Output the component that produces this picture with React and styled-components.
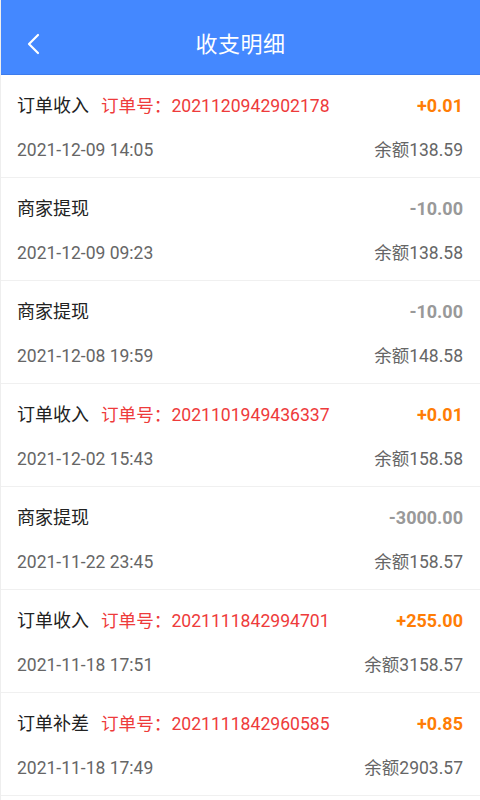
import React from "react";
import styled, { createGlobalStyle } from "styled-components";

const records = [
  { type: "订单收入", order: "2021120942902178", amount: "+0.01", time: "2021-12-09 14:05", balance: "138.59" },
  { type: "商家提现", amount: "-10.00", time: "2021-12-09 09:23", balance: "138.58" },
  { type: "商家提现", amount: "-10.00", time: "2021-12-08 19:59", balance: "148.58" },
  { type: "订单收入", order: "2021101949436337", amount: "+0.01", time: "2021-12-02 15:43", balance: "158.58" },
  { type: "商家提现", amount: "-3000.00", time: "2021-11-22 23:45", balance: "158.57" },
  { type: "订单收入", order: "2021111842994701", amount: "+255.00", time: "2021-11-18 17:51", balance: "3158.57" },
  { type: "订单补差", order: "2021111842960585", amount: "+0.85", time: "2021-11-18 17:49", balance: "2903.57" },
];

export default function App() {
  return (
    <>
      <GlobalStyle />
      <Page>
        <Header>
          <BackButton aria-label="返回">
            <svg width="14" height="22" viewBox="0 0 14 22" fill="none">
              <path d="M12 2 L3 11 L12 20" stroke="#fff" strokeWidth="2.2" strokeLinecap="round" strokeLinejoin="round" />
            </svg>
          </BackButton>
          <Title>收支明细</Title>
        </Header>
        <List>
          {records.map((r, i) => (
            <Row key={i}>
              <Line>
                <Left>
                  <Type>{r.type}</Type>
                  {r.order && <Order>订单号：{r.order}</Order>}
                </Left>
                <Amount $positive={r.amount.startsWith("+")}>{r.amount}</Amount>
              </Line>
              <Line>
                <Meta>{r.time}</Meta>
                <Meta>余额{r.balance}</Meta>
              </Line>
            </Row>
          ))}
        </List>
      </Page>
    </>
  );
}

const GlobalStyle = createGlobalStyle`
  * { box-sizing: border-box; }
  body {
    margin: 0;
    background: #fff;
    font-family: Roboto, "Noto Sans CJK SC", sans-serif;
  }
`;

const Page = styled.div`
  width: 480px;
  min-height: 800px;
  background: #fff;
  border-left: 1px solid #eeeeee;
`;

// Blue title bar
const Header = styled.header`
  height: 75px;
  background: #4488ff;
  border-bottom: 1px solid #3d7cec;
  display: flex;
  align-items: center;
  justify-content: center;
  position: relative;
  padding-top: 10px;
`;

const BackButton = styled.button`
  position: absolute;
  left: 20px;
  top: 32px;
  width: 24px;
  height: 24px;
  padding: 0;
  border: 0;
  background: none;
  display: flex;
  align-items: center;
  justify-content: center;
`;

const Title = styled.h1`
  margin: 0;
  font-size: 22px;
  font-weight: 400;
  color: #fff;
  letter-spacing: 0.5px;
`;

const List = styled.div`
  display: flex;
  flex-direction: column;
`;

// One record
const Row = styled.div`
  height: 103px;
  padding: 19px 17px 16px 16px;
  border-bottom: 1px solid #f0f0f0;
  display: flex;
  flex-direction: column;
  gap: 20px;
`;

const Line = styled.div`
  display: flex;
  align-items: baseline;
  justify-content: space-between;
  height: 24px;
  line-height: 24px;
`;

const Left = styled.div`
  display: flex;
  align-items: baseline;
  gap: 12px;
`;

const Type = styled.span`
  font-size: 18px;
  color: #222;
`;

const Order = styled.span`
  font-size: 17.6px;
  color: #ee3b3b;
`;

const Amount = styled.span`
  font-size: 18px;
  font-weight: 700;
  color: ${(p) => (p.$positive ? "#ff7d05" : "#999999")};
`;

const Meta = styled.span`
  font-size: 17.5px;
  color: #666;
`;
